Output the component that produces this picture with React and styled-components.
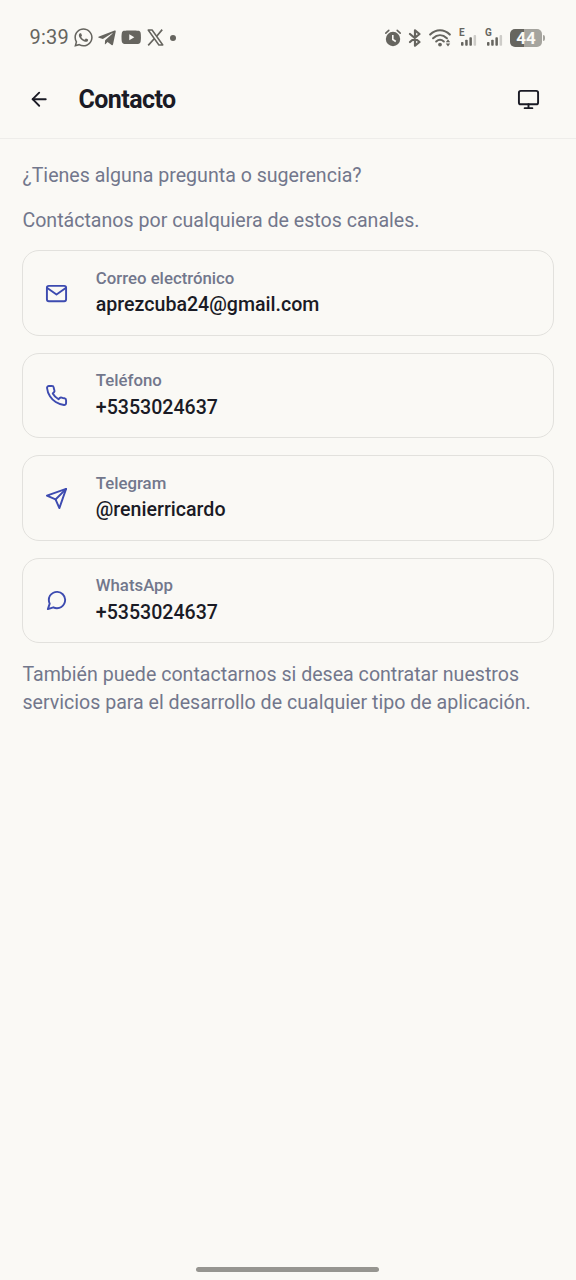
import React from "react";
import styled, { createGlobalStyle } from "styled-components";
import { FiArrowLeft, FiMonitor, FiMail, FiPhone, FiSend, FiMessageCircle } from "react-icons/fi";
import { FaWhatsapp, FaTelegramPlane, FaYoutube } from "react-icons/fa";

const GlobalStyle = createGlobalStyle`
  * { box-sizing: border-box; }
  body { margin: 0; background: #faf9f5; font-family: Roboto, sans-serif; }
  svg { display: block; flex: none; }
`;

const Screen = styled.div`
  height: 1280px;
  display: flex;
  flex-direction: column;
  background: #faf9f5;
`;

const StatusBar = styled.div`
  height: 61px;
  padding: 14px 34px 0 29.5px;
  display: flex;
  align-items: center;
  justify-content: space-between;
  color: #66655f;
`;

const StatusGroup = styled.div`
  display: flex;
  align-items: center;
`;

const Clock = styled.span`
  font-size: 20px;
  line-height: 24px;
  width: 44px;
  padding-bottom: 2px;
  letter-spacing: 0.2px;
  white-space: nowrap;
`;

const Dot = styled.span`
  width: 6px;
  height: 6px;
  border-radius: 50%;
  margin-left: 6px;
  background: currentColor;
`;

const Header = styled.header`
  height: 78px;
  padding: 0 36px 0 28px;
  display: flex;
  align-items: center;
  color: #1a1b25;
  border-bottom: 1px solid #eeedea;
`;

const Title = styled.h1`
  margin: 0 auto 0 28px;
  font-size: 25px;
  line-height: 30px;
  font-weight: 700;
  letter-spacing: -0.55px;
`;

const Content = styled.main`
  flex: 1;
  padding: 23px 22.4px 0;
`;

const Paragraph = styled.p`
  margin: 0 0 ${(p) => p.$gap}px;
  font-size: 19.6px;
  line-height: 28px;
  color: #72778c;
`;

const CardList = styled.div`
  display: flex;
  flex-direction: column;
  gap: 17px;
  margin-bottom: 18px;
`;

const Card = styled.div`
  height: 85.4px;
  display: flex;
  align-items: center;
  gap: 27.7px;
  padding: 0 21.7px;
  border: 1px solid #e2e1dd;
  border-radius: 17px;
`;

const CardIcon = styled.span`
  padding-top: 1px;
  color: #3d4bb0;
`;

const CardText = styled.div`
  display: flex;
  flex-direction: column;
  gap: 1.4px;
  padding-bottom: 0.8px;
`;

const CardLabel = styled.div`
  font-size: 16.8px;
  line-height: 24px;
  font-weight: 500;
  color: #72778c;
`;

const CardValue = styled.div`
  font-size: 19.6px;
  line-height: 28px;
  font-weight: 500;
  color: #1a1b25;
`;

const HomeBar = styled.div`
  width: 183px;
  height: 5px;
  margin: 0 auto 8px 196px;
  border-radius: 3px;
  background: #969590;
`;

const Battery = styled.span`
  position: relative;
  width: 32px;
  height: 18px;
  margin-left: 7px;
  border-radius: 5px;
  background: linear-gradient(90deg, #66655f 45%, #a5a49e 45%);
  color: #faf9f5;
  font-size: 17px;
  line-height: 19px;
  font-weight: 700;
  text-align: center;

  &::after {
    content: "";
    position: absolute;
    left: 33px;
    top: 6px;
    width: 2px;
    height: 6px;
    border-radius: 0 2px 2px 0;
    background: #a5a49e;
  }
`;

const SignalBox = styled.span`
  position: relative;
  width: 18px;
  height: 20px;
  margin-left: ${(p) => p.$left}px;
`;

const Network = styled.span`
  position: absolute;
  left: 0;
  top: 0;
  font-size: 10px;
  line-height: 10px;
  font-weight: 700;
`;

const Alarm = () => (
  <svg width="18" height="18" viewBox="0 0 18 18">
    <circle cx="9" cy="10" r="7.2" fill="currentColor" />
    <path d="M1.8 4.2 4.8 1.4M16.2 4.2 13.2 1.4" stroke="currentColor" strokeWidth="1.6" strokeLinecap="round" />
    <path d="M8.8 6v4.5l3 2" fill="none" stroke="#faf9f5" strokeWidth="1.6" />
  </svg>
);

const Bluetooth = () => (
  <svg width="14" height="18" viewBox="0 0 14 18">
    <path
      d="M2 5l9.5 8L7 16.7V1.3L11.5 5 2 13"
      fill="none"
      stroke="currentColor"
      strokeWidth="2.2"
      strokeLinecap="round"
      strokeLinejoin="round"
    />
  </svg>
);

const XLogo = () => (
  <svg width="17" height="17" viewBox="0 0 17 17" fill="none" stroke="currentColor">
    <path d="M1.2 1h3.9l10.7 15h-3.9z" strokeWidth="1.5" strokeLinejoin="round" />
    <path d="M15.2.6 9.7 7.2M7.2 9.8 1.2 16.4" strokeWidth="1.7" />
  </svg>
);

const Wifi = () => (
  <svg width="22" height="18" viewBox="0 0 22 18">
    <g fill="none" stroke="currentColor" strokeWidth="2.1" strokeLinecap="round">
      <path d="M1.2 5.6C7-.2 15-.2 20.8 5.6" />
      <path d="M4.1 9.2c4.2-4 9.6-4 13.8 0" />
      <path d="M7.2 12.5c2.4-2.2 5.2-2.2 7.6 0" />
    </g>
    <circle cx="11" cy="15.6" r="1.9" fill="currentColor" />
    <path d="m19 10.3 2.2 3h-4.4zM19 17.5l-2.2-3h4.4z" fill="currentColor" />
  </svg>
);

const Signal = ({ label, left }) => (
  <SignalBox $left={left}>
    <Network>{label}</Network>
    <svg width="18" height="20" viewBox="0 0 18 20">
      <g fill="currentColor">
        <rect x="2" y="14" width="2.5" height="3.8" rx=".8" />
        <rect x="6.2" y="11.8" width="2.5" height="6" rx=".8" />
        <rect x="10.4" y="9.3" width="2.5" height="8.5" rx=".8" />
        <rect x="14.6" y="7.1" width="2.5" height="10.7" rx=".8" opacity=".3" />
      </g>
    </svg>
  </SignalBox>
);

const StatusIcon = styled.span`
  margin-left: ${(p) => p.$left}px;
`;

const contacts = [
  { label: "Correo electrónico", value: "aprezcuba24@gmail.com", Icon: FiMail },
  { label: "Teléfono", value: "+5353024637", Icon: FiPhone },
  { label: "Telegram", value: "@renierricardo", Icon: FiSend },
  { label: "WhatsApp", value: "+5353024637", Icon: FiMessageCircle },
];

export default function App() {
  return (
    <Screen>
      <GlobalStyle />
      <StatusBar>
        <StatusGroup>
          <Clock>9:39</Clock>
          <StatusIcon $left={-0.5}><FaWhatsapp size={21} /></StatusIcon>
          <StatusIcon $left={3}><FaTelegramPlane size={20} /></StatusIcon>
          <StatusIcon $left={3.5}><FaYoutube size={20.5} /></StatusIcon>
          <StatusIcon $left={5.5}><XLogo /></StatusIcon>
          <Dot />
        </StatusGroup>
        <StatusGroup>
          <Alarm />
          <StatusIcon $left={6}><Bluetooth /></StatusIcon>
          <StatusIcon $left={7.5}><Wifi /></StatusIcon>
          <Signal label="E" left={8} />
          <Signal label="G" left={8} />
          <Battery>44</Battery>
        </StatusGroup>
      </StatusBar>
      <Header>
        <FiArrowLeft size={22.4} />
        <Title>Contacto</Title>
        <FiMonitor size={23} />
      </Header>
      <Content>
        <Paragraph $gap={17}>¿Tienes alguna pregunta o sugerencia?</Paragraph>
        <Paragraph $gap={15.4}>Contáctanos por cualquiera de estos canales.</Paragraph>
        <CardList>
          {contacts.map(({ label, value, Icon }) => (
            <Card key={label}>
              <CardIcon><Icon size={23} /></CardIcon>
              <CardText>
                <CardLabel>{label}</CardLabel>
                <CardValue>{value}</CardValue>
              </CardText>
            </Card>
          ))}
        </CardList>
        <Paragraph $gap={0}>
          También puede contactarnos si desea contratar nuestros servicios para el desarrollo de cualquier tipo de aplicación.
        </Paragraph>
      </Content>
      <HomeBar />
    </Screen>
  );
}
